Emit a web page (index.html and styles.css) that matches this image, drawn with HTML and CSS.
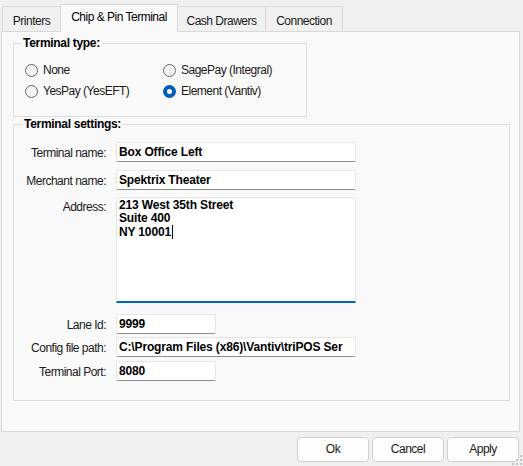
FILE: index.html
```html
<!DOCTYPE html>
<html lang="en">
<head>
<meta charset="UTF-8">
<title>Chip &amp; Pin Terminal</title>
<link rel="stylesheet" href="styles.css">
</head>
<body>
<div class="dialog">
    <div class="tabs">
        <div class="tab tab-printers">Printers</div>
        <div class="tab tab-chip active">Chip &amp; Pin Terminal</div>
        <div class="tab tab-cash">Cash Drawers</div>
        <div class="tab tab-conn">Connection</div>
    </div>

    <div class="page">
        <fieldset class="group type-group">
            <legend>Terminal type:</legend>
            <div class="radios">
                <div class="radio"><span class="circle"></span>None</div>
                <div class="radio"><span class="circle"></span>SagePay (Integral)</div>
                <div class="radio"><span class="circle"></span>YesPay (YesEFT)</div>
                <div class="radio"><span class="circle checked"></span>Element (Vantiv)</div>
            </div>
        </fieldset>

        <fieldset class="group settings-group">
            <legend>Terminal settings:</legend>
            <div class="row row-name">
                <div class="lbl">Terminal name:</div>
                <div class="field wide">Box Office Left</div>
            </div>
            <div class="row row-merchant">
                <div class="lbl">Merchant name:</div>
                <div class="field wide">Spektrix Theater</div>
            </div>
            <div class="row row-address">
                <div class="lbl lbl-top">Address:</div>
                <div class="field wide area">213 West 35th Street<br>Suite 400<br>NY 10001<span class="caret"></span></div>
            </div>
            <div class="row row-lane">
                <div class="lbl">Lane Id:</div>
                <div class="field short">9999</div>
            </div>
            <div class="row row-config">
                <div class="lbl">Config file path:</div>
                <div class="field wide clip">C:\Program Files (x86)\Vantiv\triPOS Ser</div>
            </div>
            <div class="row row-port">
                <div class="lbl">Terminal Port:</div>
                <div class="field short">8080</div>
            </div>
        </fieldset>
    </div>

    <div class="buttons">
        <div class="btn">Ok</div>
        <div class="btn">Cancel</div>
        <div class="btn">Apply</div>
    </div>
    <svg class="grip" width="10" height="10" viewBox="0 0 10 10">
        <rect x="8" y="0" width="2" height="2" fill="#c4c4c4"/>
        <rect x="4" y="4" width="2" height="2" fill="#c4c4c4"/>
        <rect x="8" y="4" width="2" height="2" fill="#c4c4c4"/>
        <rect x="0" y="8" width="2" height="2" fill="#c4c4c4"/>
        <rect x="4" y="8" width="2" height="2" fill="#c4c4c4"/>
        <rect x="8" y="8" width="2" height="2" fill="#c4c4c4"/>
    </svg>
</div>
</body>
</html>
```

FILE: styles.css
```css
html, body {
    margin: 0;
    padding: 0;
}
body {
    background: #f0f0f0;
    font-family: "Liberation Sans", Arial, sans-serif;
    font-size: 12px;
    letter-spacing: -0.5px;
    color: #000;
}
.dialog {
    position: relative;
    width: 523px;
    height: 466px;
}

/* tab strip */
.tabs {
    display: flex;
    align-items: flex-end;
    height: 31px;
    padding-left: 2px;
}
.tab {
    box-sizing: border-box;
    height: 25px;
    border: 1px solid #d9d9d9;
    border-bottom: none;
    background: #f0f0f0;
    text-align: center;
    line-height: 28px;
    color: #1a1a1a;
}
.tab + .tab {
    margin-left: -1px;
}
.tab-printers { width: 59px; }
.tab-chip { width: 118px; }
.tab-cash { width: 89px; }
.tab-conn { width: 78px; }
.tab.active {
    position: relative;
    z-index: 2;
    height: 28px;
    margin-bottom: -1px;
    background: #f9f9f9;
    line-height: 25px;
    color: #000;
}

/* tab page */
.page {
    box-sizing: border-box;
    width: 519px;
    height: 401px;
    margin-left: 1px;
    border: 1px solid #d9d9d9;
    background: #f9f9f9;
    padding: 4px 9px 0 11px;
}
.group {
    margin: 0;
    border: 1px solid #dcdcdc;
    padding: 0;
    min-width: 0;
}
.group legend {
    margin-left: 7px;
    padding: 0 2px 0 2px;
    font-weight: bold;
    letter-spacing: -0.3px;
    line-height: 14px;
}
.type-group {
    width: 294px;
    box-sizing: border-box;
    height: 81px;
    padding: 14px 0 0 11px;
}
.type-group legend {
    margin-left: -4px;
}
.radios {
    display: grid;
    grid-template-columns: 138px 138px;
    row-gap: 8px;
}
.radio {
    display: flex;
    align-items: center;
    height: 13px;
    line-height: 13px;
    color: #1a1a1a;
}
.circle {
    box-sizing: border-box;
    width: 13px;
    height: 13px;
    margin-right: 5px;
    border: 1px solid #666;
    border-radius: 50%;
    background: #f4f4f4;
}
.circle.checked {
    border: 4px solid #005fb8;
    background: #fff;
}

.settings-group {
    box-sizing: border-box;
    width: 497px;
    height: 284px;
    margin-top: 0;
    padding: 11px 0 0 1px;
}
.row {
    display: flex;
    align-items: center;
}
.row-merchant { margin-top: 8px; }
.row-address { margin-top: 7px; align-items: flex-start; }
.row-lane { margin-top: 11px; }
.row-config { margin-top: 3px; }
.row-port { margin-top: 4px; }
.lbl {
    width: 91px;
    margin-right: 10px;
    text-align: right;
    color: #1a1a1a;
    padding-top: 2px;
}
.lbl-top {
    padding-top: 3px;
}
.field {
    box-sizing: border-box;
    height: 20px;
    padding: 0 2px;
    background: #fff;
    border: 1px solid #e5e5e5;
    border-bottom-color: #8d8d8d;
    border-radius: 2px;
    font-weight: bold;
    letter-spacing: -0.15px;
    line-height: 19px;
    white-space: nowrap;
}
.wide { width: 240px; }
.short { width: 100px; }
.clip { overflow: hidden; }
.area {
    height: 106px;
    padding-top: 1px;
    line-height: 13px;
    border-bottom: 2px solid #0067c0;
    border-radius: 2px 2px 0 0;
}
.caret {
    display: inline-block;
    width: 1px;
    height: 14px;
    margin-left: 1px;
    background: #000;
    vertical-align: -3px;
}

/* dialog buttons */
.buttons {
    display: flex;
    justify-content: flex-end;
    gap: 3px;
    margin-top: 5px;
    padding-right: 4px;
}
.btn {
    box-sizing: border-box;
    width: 72px;
    height: 25px;
    border: 1px solid #d0d0d0;
    border-radius: 4px;
    background: #fdfdfd;
    text-align: center;
    line-height: 23px;
    color: #1a1a1a;
}
.grip {
    position: absolute;
    right: 1px;
    bottom: 1px;
}
```
